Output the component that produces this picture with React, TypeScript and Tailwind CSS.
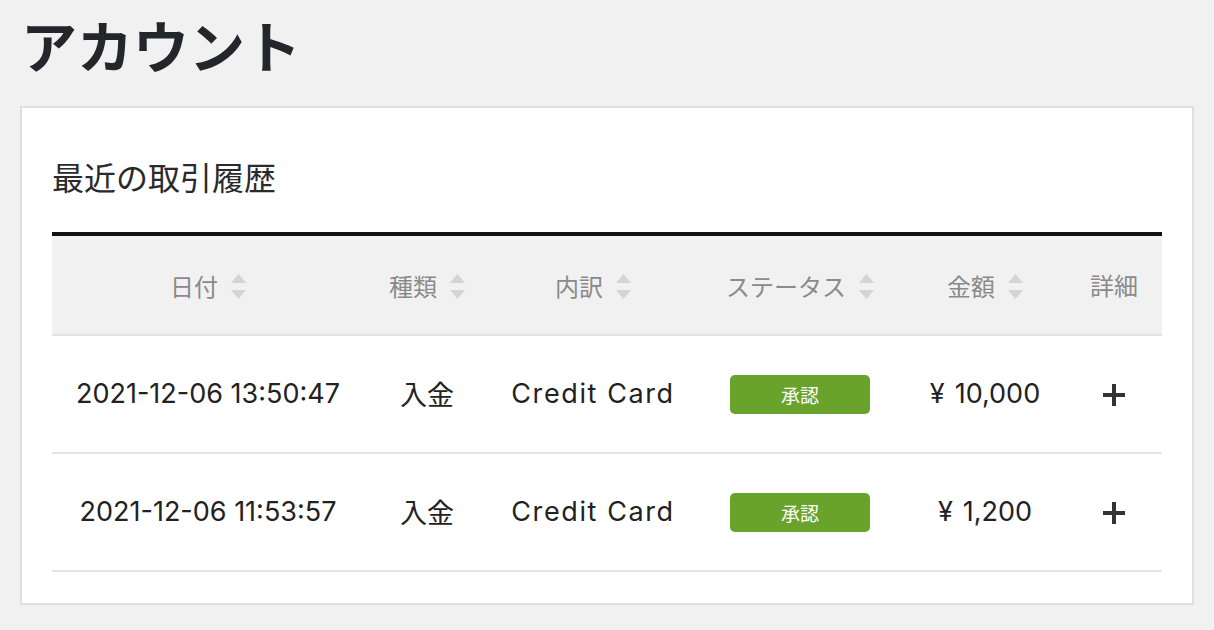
import React from "react";

const latin = "font-['Inter','Noto_Sans_CJK_JP',sans-serif]";

function SortIcon() {
  return (
    <svg width="15" height="25" viewBox="0 0 15 25" className="inline-block ml-[13px] align-middle">
      <polygon points="7.5,0 15,9 0,9" fill="#d4d4d4" />
      <polygon points="0,16 15,16 7.5,25" fill="#d4d4d4" />
    </svg>
  );
}

const rows = [
  { date: "2021-12-06 13:50:47", type: "入金", method: "Credit Card", amount: "10,000" },
  { date: "2021-12-06 11:53:57", type: "入金", method: "Credit Card", amount: "1,200" },
];

export default function App() {
  return (
    <div className={`min-h-[630px] bg-[#f1f1f1] px-5 pt-[11px] ${latin}`}>
      <h1 className="text-[56px] font-bold leading-[66px] text-[#23272b] pl-[1px] mb-[29px] font-['Noto_Sans_CJK_JP',sans-serif]">
        アカウント
      </h1>
      <div className="bg-white border-2 border-[#dedede] px-[30px] pt-[44px] pb-[31px]">
        <h2 className="text-[32px] leading-[48px] text-[#2a2a2a] font-['Noto_Sans_CJK_JP',sans-serif] mb-[32px]">
          最近の取引履歴
        </h2>
        <table className="w-full table-fixed border-collapse">
          <colgroup>
            <col className="w-[312px]" />
            <col className="w-[126px]" />
            <col className="w-[206px]" />
            <col className="w-[208px]" />
            <col className="w-[162px]" />
            <col />
          </colgroup>
          <thead>
            <tr className="bg-[#f1f1f1] border-t-4 border-[#111] h-[101px]">
              {["日付", "種類", "内訳", "ステータス", "金額"].map((h) => (
                <th key={h} className="text-center font-normal text-[24px] text-[#8a8a8a] font-['Noto_Sans_CJK_JP',sans-serif]">
                  <span className="align-middle">{h}</span>
                  <SortIcon />
                </th>
              ))}
              <th className="text-center font-normal text-[24px] text-[#8a8a8a] font-['Noto_Sans_CJK_JP',sans-serif]">詳細</th>
            </tr>
          </thead>
          <tbody>
            {rows.map((r) => (
              <tr key={r.date} className="border-t-2 border-b-2 border-[#e3e3e3] h-[118px] text-[#222] text-[27px]">
                <td className="text-center">{r.date}</td>
                <td className="text-center font-['Noto_Sans_CJK_JP',sans-serif]">{r.type}</td>
                <td className="text-center tracking-[1.6px]">{r.method}</td>
                <td className="text-center">
                  <span className="inline-flex items-center justify-center w-[140px] h-[39px] rounded-[5px] bg-[#69a32b] text-white text-[19px] font-['Noto_Sans_CJK_JP',sans-serif]">
                    承認
                  </span>
                </td>
                <td className="text-center">
                  <span className="mr-[10px]">¥</span>
                  {r.amount}
                </td>
                <td className="text-center">
                  <svg width="22" height="22" viewBox="0 0 22 22" className="inline-block">
                    <rect x="9" y="0" width="4" height="22" fill="#333" />
                    <rect x="0" y="9" width="22" height="4" fill="#333" />
                  </svg>
                </td>
              </tr>
            ))}
          </tbody>
        </table>
      </div>
    </div>
  );
}
